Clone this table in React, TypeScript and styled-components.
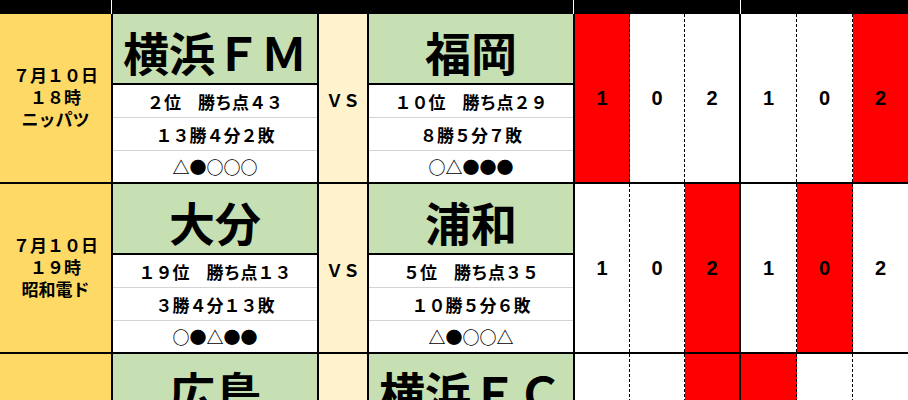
import React from "react";
import styled, { createGlobalStyle } from "styled-components";

const GlobalStyle = createGlobalStyle`
  html, body {
    margin: 0;
    padding: 0;
    background: #ffffff;
    overflow: hidden;
  }
  * { box-sizing: border-box; }
`;

const JP = `"Noto Sans CJK JP", "Noto Sans", sans-serif`;

const Sheet = styled.div`
  width: 908px;
  height: 400px;
  overflow: hidden;
  font-family: ${JP};
  color: #000;
`;

const Header = styled.div`
  display: flex;
  gap: 1px;
  height: 14px;
  background: #ffffff;
`;

const HeaderCell = styled.div<{ $w?: number }>`
  background: #000;
  ${(p) => (p.$w ? `width: ${p.$w}px; flex: none;` : `flex: 1;`)}
`;

const Row = styled.div`
  display: grid;
  grid-template-columns: 113px 206px 50px 206px 55px 55px 56px 56px 56px 56px;
  height: 170px;
  border-bottom: 2px solid #000;
`;

const DateCell = styled.div`
  background: #ffd966;
  border-right: 2px solid #000;
  display: flex;
  flex-direction: column;
  align-items: center;
  justify-content: center;
  font-size: 17px;
  font-weight: 700;
  padding-bottom: 2px;
`;

const DateLine = styled.div`
  height: 22px;
  line-height: 22px;
  white-space: nowrap;
`;

const TeamCell = styled.div`
  display: grid;
  grid-template-rows: 71px 32px 33px 32px;
  border-right: 2px solid #000;
  background: #fff;
`;

const TeamName = styled.div`
  background: #c6e0b4;
  border-bottom: 2px solid #000;
  display: flex;
  align-items: center;
  justify-content: center;
  font-size: 46px;
  font-weight: 700;
  line-height: 1;
  padding-top: 4px;
  white-space: nowrap;
`;

const InfoLine = styled.div<{ $sep?: boolean }>`
  display: flex;
  align-items: center;
  justify-content: center;
  font-size: 17px;
  font-weight: 700;
  line-height: 1;
  white-space: nowrap;
  border-top: ${(p) => (p.$sep ? "1px solid #d4d4d4" : "none")};
`;

const VsCell = styled.div`
  background: #fff2cc;
  border-right: 2px solid #000;
  display: flex;
  align-items: center;
  justify-content: center;
  font-size: 17px;
  font-weight: 700;
  padding-top: 3px;
`;

const ScoreCell = styled.div<{ $red: boolean; $solid: boolean }>`
  background: ${(p) => (p.$red ? "#ff0000" : "#ffffff")};
  border-right: ${(p) => (p.$solid ? "2px solid #000" : "1px dashed #000")};
  display: flex;
  align-items: center;
  justify-content: center;
  font-family: "Liberation Sans", Arial, sans-serif;
  font-size: 20px;
  font-weight: 700;
`;

type Team = { name: string; rank: string; record: string; form: string };
type Match = {
  date: string[];
  home: Team;
  away: Team;
  red: boolean[];
};

const SCORES = ["1", "0", "2", "1", "0", "2"];

const matches: Match[] = [
  {
    date: ["７月１０日", "１８時", "ニッパツ"],
    home: { name: "横浜ＦＭ", rank: "２位　勝ち点４３", record: "１３勝４分２敗", form: "△●○○○" },
    away: { name: "福岡", rank: "１０位　勝ち点２９", record: "８勝５分７敗", form: "○△●●●" },
    red: [true, false, false, false, false, true],
  },
  {
    date: ["７月１０日", "１９時", "昭和電ド"],
    home: { name: "大分", rank: "１９位　勝ち点１３", record: "３勝４分１３敗", form: "○●△●●" },
    away: { name: "浦和", rank: "５位　勝ち点３５", record: "１０勝５分６敗", form: "△●○○△" },
    red: [false, false, true, false, true, false],
  },
  {
    date: ["７月１０日", "１９時", "Ｅスタ"],
    home: { name: "広島", rank: "１１位　勝ち点２７", record: "７勝６分７敗", form: "○○△●○" },
    away: { name: "横浜ＦＣ", rank: "１８位　勝ち点１６", record: "４勝４分１３敗", form: "●△●○●" },
    red: [false, false, true, true, false, false],
  },
];

const TeamBlock: React.FC<{ team: Team }> = ({ team }) => (
  <TeamCell>
    <TeamName>{team.name}</TeamName>
    <InfoLine>{team.rank}</InfoLine>
    <InfoLine $sep>{team.record}</InfoLine>
    <InfoLine $sep>{team.form}</InfoLine>
  </TeamCell>
);

export default function App() {
  return (
    <>
      <GlobalStyle />
      <Sheet>
        <Header>
          <HeaderCell $w={111} />
          <HeaderCell $w={461} />
          <HeaderCell $w={166} />
          <HeaderCell />
        </Header>
        {matches.map((m, i) => (
          <Row key={i}>
            <DateCell>
              {m.date.map((d, j) => (
                <DateLine key={j}>{d}</DateLine>
              ))}
            </DateCell>
            <TeamBlock team={m.home} />
            <VsCell>ＶＳ</VsCell>
            <TeamBlock team={m.away} />
            {SCORES.map((s, j) => (
              <ScoreCell key={j} $red={m.red[j]} $solid={j === 2}>
                {s}
              </ScoreCell>
            ))}
          </Row>
        ))}
      </Sheet>
    </>
  );
}
